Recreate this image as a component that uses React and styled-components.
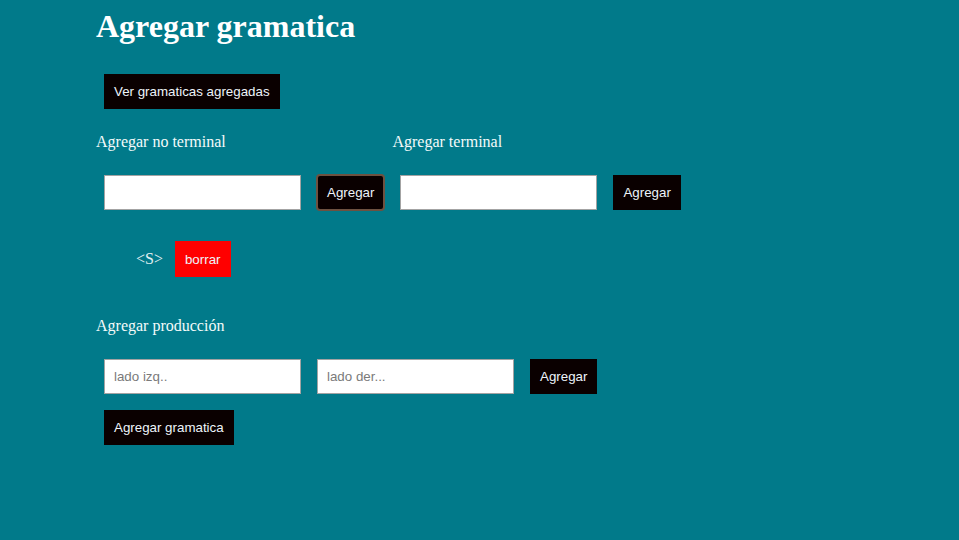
import React, { useState } from "react";
import styled, { createGlobalStyle } from "styled-components";

const GlobalStyle = createGlobalStyle`
    html, body {
        margin: 0;
        background: #017a8a;
    }
    body {
        font-family: "Liberation Serif", "Times New Roman", serif;
        color: #f4fafa;
    }
`;

const App = () => {
    const [noTerminales, setNoTerminales] = useState(["S"]);
    const [nt, setNt] = useState("");
    const [t, setT] = useState("");
    const [izq, setIzq] = useState("");
    const [der, setDer] = useState("");

    const agregarNt = () => {
        if (!nt) return;
        setNoTerminales([...noTerminales, nt]);
        setNt("");
    };

    return (
        <Page>
            <GlobalStyle />
            <Title>Agregar gramatica</Title>
            <Row>
                <Button>Ver gramaticas agregadas</Button>
            </Row>

            <Groups>
                <Group>
                    <Label>Agregar no terminal</Label>
                    <Row>
                        <Input value={nt} onChange={e => setNt(e.target.value)} />
                        <Button focused onClick={agregarNt}>
                            Agregar
                        </Button>
                    </Row>
                </Group>
                <Group>
                    <Label>Agregar terminal</Label>
                    <Row>
                        <Input value={t} onChange={e => setT(e.target.value)} />
                        <Button>Agregar</Button>
                    </Row>
                </Group>
            </Groups>

            <List>
                {noTerminales.map((item, index) => (
                    <ListItem key={index}>
                        <Symbol>{`<${item}>`}</Symbol>
                        <Button
                            danger
                            onClick={() =>
                                setNoTerminales(
                                    noTerminales.filter((_, i) => i !== index)
                                )
                            }
                        >
                            borrar
                        </Button>
                    </ListItem>
                ))}
            </List>

            <Label spaced>Agregar producción</Label>
            <Row>
                <Input
                    placeholder="lado izq.."
                    value={izq}
                    onChange={e => setIzq(e.target.value)}
                />
                <Input
                    placeholder="lado der..."
                    value={der}
                    onChange={e => setDer(e.target.value)}
                />
                <Button>Agregar</Button>
            </Row>
            <Row>
                <Button>Agregar gramatica</Button>
            </Row>
        </Page>
    );
};

const Page = styled.div`
    padding: 8px 0 0 96px;
`;

const Title = styled.h1`
    margin: 0 0 21px;
    font-size: 32px;
    line-height: 37px;
    font-weight: bold;
    color: #ffffff;
`;

const Row = styled.div`
    display: flex;
    align-items: center;
`;

const Groups = styled.div`
    display: flex;
`;

const Group = styled.div``;

const Label = styled.p`
    margin: ${props => (props.spaced ? "32px" : "16px")} 0 16px;
    font-size: 16px;
    line-height: 18px;
`;

const Input = styled.input`
    box-sizing: border-box;
    width: 197px;
    height: 35px;
    margin: 8px;
    padding: 0 9px;
    border: 1px solid #a3a3a3;
    background: #ffffff;
    font-family: "Liberation Sans", Arial, sans-serif;
    font-size: 13.33px;
    color: #222;
    outline: none;

    &::placeholder {
        color: #7a7a7a;
    }
`;

const Button = styled.button`
    box-sizing: border-box;
    height: ${props => (props.danger ? "36px" : "35px")};
    margin: 8px;
    padding: 0 10px;
    border: none;
    border-radius: ${props => (props.focused ? "3px" : "0")};
    outline: ${props => (props.focused ? "2px solid #6e5140" : "none")};
    outline-offset: -1px;
    background: ${props => (props.danger ? "#ff0000" : "#0a0000")};
    color: #eef4fa;
    font-family: "Liberation Sans", Arial, sans-serif;
    font-size: 13.33px;
    cursor: pointer;
`;

const List = styled.ul`
    margin: 15px 0 0;
    padding: 0 0 0 40px;
    list-style: none;
`;

const ListItem = styled.li`
    display: flex;
    align-items: center;
`;

const Symbol = styled.span`
    font-size: 16px;
    margin-right: 4px;
    color: #e2f0f2;
`;

export default App;
